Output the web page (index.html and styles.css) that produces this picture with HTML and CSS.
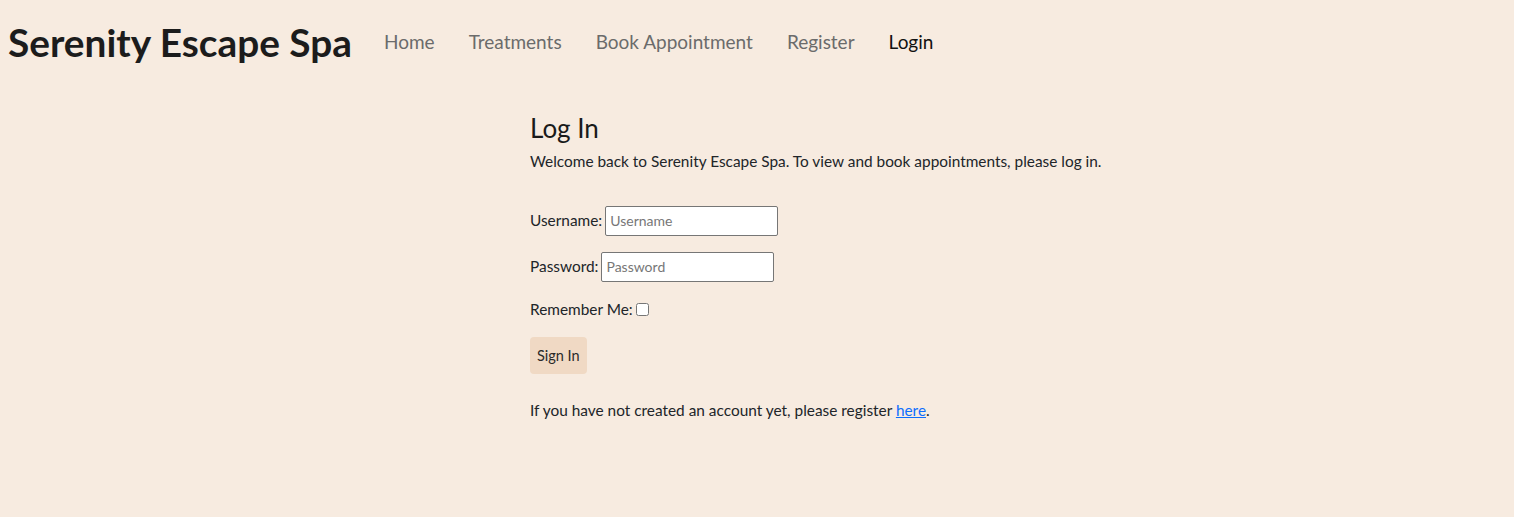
FILE: index.html
```html
<!DOCTYPE html>
<html lang="en">
<head>
<meta charset="utf-8">
<title>Serenity Escape Spa - Log In</title>
<link rel="stylesheet" href="styles.css">
</head>
<body>
<header class="navbar">
  <a class="brand" href="#">Serenity Escape Spa</a>
  <nav class="nav">
    <a class="nav-link" href="#">Home</a>
    <a class="nav-link" href="#">Treatments</a>
    <a class="nav-link" href="#">Book Appointment</a>
    <a class="nav-link" href="#">Register</a>
    <a class="nav-link active" href="#">Login</a>
  </nav>
</header>
<main class="main">
  <section class="login">
    <h1 class="title">Log In</h1>
    <p class="intro">Welcome back to Serenity Escape Spa. To view and book appointments, please log in.</p>
    <form class="form">
      <p class="field"><label for="u">Username:</label> <input id="u" class="input" type="text" placeholder="Username"></p>
      <p class="field"><label for="p">Password:</label> <input id="p" class="input" type="password" placeholder="Password"></p>
      <p class="field"><label for="r">Remember Me:</label> <input id="r" class="check" type="checkbox"></p>
      <button class="btn" type="button">Sign In</button>
    </form>
    <p class="note">If you have not created an account yet, please register <a href="#" class="link">here</a>.</p>
  </section>
</main>
</body>
</html>
```
FILE: styles.css
```css
* { box-sizing: border-box; }
html, body { margin: 0; padding: 0; }
body {
  background: #f7ebe0;
  color: #212529;
  font-family: "Lato", "Open Sans", sans-serif;
  font-size: 15.4px;
  line-height: 1.5;
}
.navbar {
  display: flex;
  align-items: center;
  padding: 19px 8px 0 8px;
}
.brand {
  font-size: 38.8px;
  font-weight: 700;
  color: #1c1c1c;
  text-decoration: none;
  line-height: 1.2;
  margin-right: 15px;
}
.nav { display: flex; gap: 0; }
.nav-link {
  font-size: 19px;
  color: #6b6b6b;
  text-decoration: none;
  padding: 8px 17px;
}
.nav-link.active { color: #111; }
.main {
  padding: 47px 0 0 530px;
}
.title {
  font-size: 26px;
  font-weight: 400;
  margin: 0 0 6px 0;
  line-height: 1.2;
  color: #1a1a1a;
}
.intro { margin: 0 0 33px 0; }
.form { margin: 0; }
.field { margin: 0 0 16px 0; display: flex; align-items: center; gap: 3px; }
.input {
  width: 173px;
  height: 30px;
  border: 1px solid #767676;
  border-radius: 2px;
  background: #fff;
  font-family: inherit;
  font-size: 14px;
  padding: 2px 4px;
}
.input::placeholder { color: #777; }
.check { width: 13px; height: 13px; margin: 0; }
.btn {
  background: #f0d9c4;
  border: none;
  border-radius: 4px;
  font-family: inherit;
  font-size: 14.5px;
  color: #2a2a2a;
  padding: 0 7px;
  height: 37px;
  margin-top: 0;
}
.note { margin: 25px 0 0 0; }
.link { color: #0d6efd; }
```
